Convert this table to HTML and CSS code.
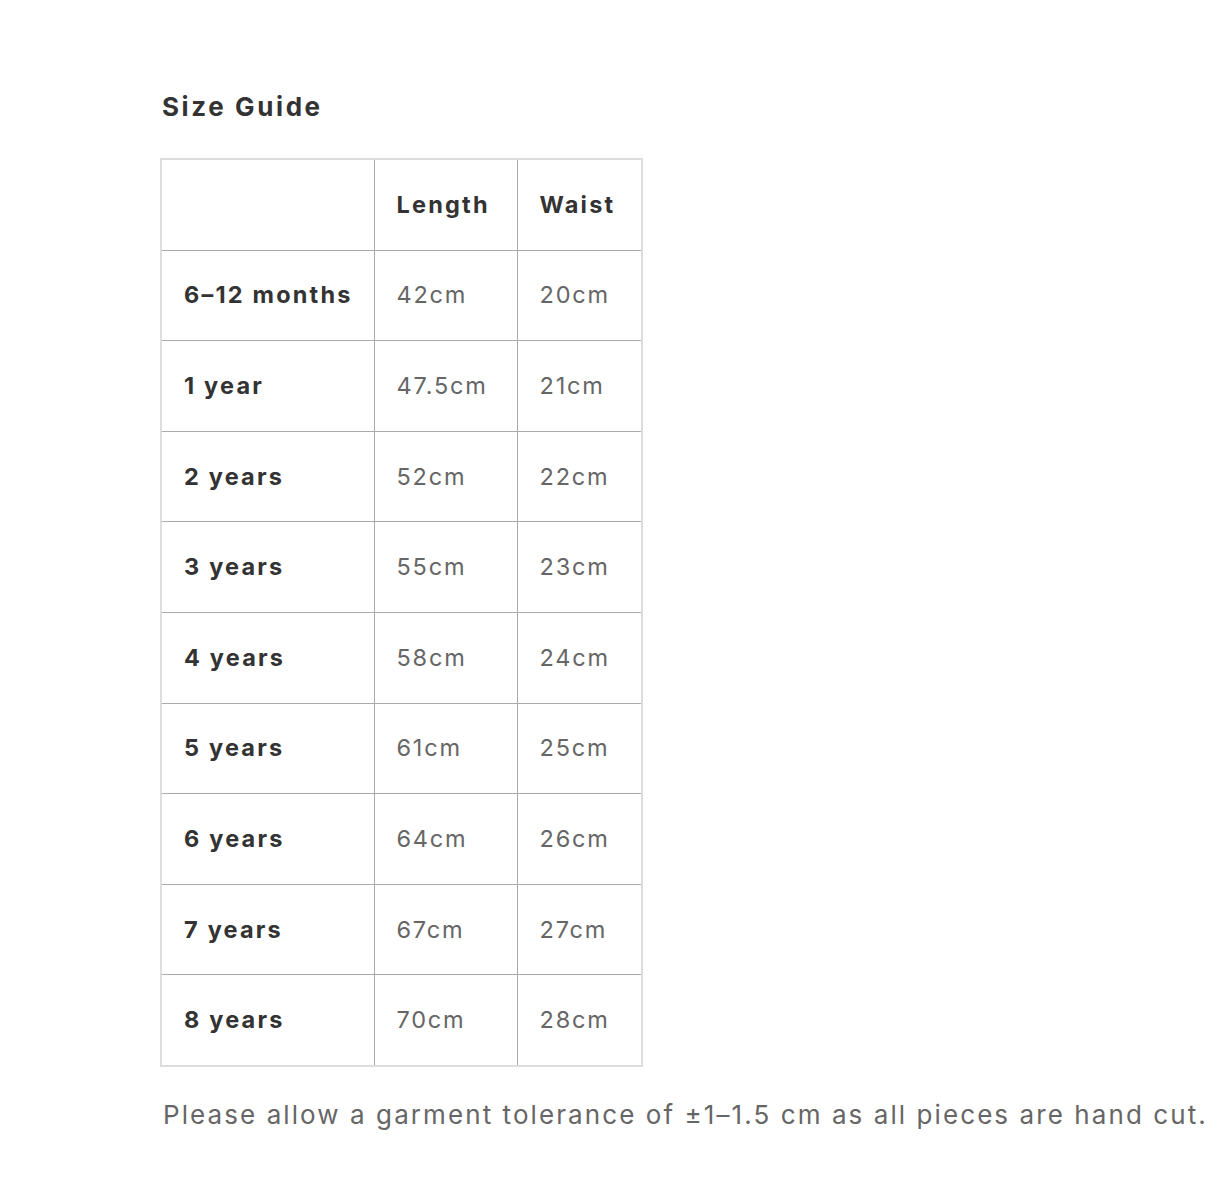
FILE: index.html
```html
<!DOCTYPE html>
<html lang="en">
<head>
<meta charset="utf-8">
<title>Size Guide</title>
<link rel="stylesheet" href="styles.css">
</head>
<body>
<main class="page">
  <h2 class="title">Size Guide</h2>
  <table class="size-table">
    <colgroup>
      <col class="c1"><col class="c2"><col class="c3">
    </colgroup>
    <thead>
      <tr><th></th><th>Length</th><th>Waist</th></tr>
    </thead>
    <tbody>
      <tr><th>6–12 months</th><td>42cm</td><td>20cm</td></tr>
      <tr><th>1 year</th><td>47.5cm</td><td>21cm</td></tr>
      <tr><th>2 years</th><td>52cm</td><td>22cm</td></tr>
      <tr><th>3 years</th><td>55cm</td><td>23cm</td></tr>
      <tr><th>4 years</th><td>58cm</td><td>24cm</td></tr>
      <tr><th>5 years</th><td>61cm</td><td>25cm</td></tr>
      <tr><th>6 years</th><td>64cm</td><td>26cm</td></tr>
      <tr><th>7 years</th><td>67cm</td><td>27cm</td></tr>
      <tr><th>8 years</th><td>70cm</td><td>28cm</td></tr>
    </tbody>
  </table>
  <p class="note">Please allow a garment tolerance of ±1–1.5 cm as all pieces are hand cut.</p>
</main>
</body>
</html>
```
FILE: styles.css
```css
html, body {
  margin: 0;
  padding: 0;
  background: #fff;
}
body {
  font-family: Inter, "Noto Sans", sans-serif;
  color: #333;
}
.page {
  padding: 92px 0 0 162px;
}
.title {
  margin: 0 0 36px;
  font-size: 26px;
  font-weight: 700;
  letter-spacing: 2.6px;
  line-height: 30px;
  color: #333;
}
.size-table {
  border-collapse: collapse;
  border: 2px solid #ddd;
  margin-left: -2px;
  table-layout: fixed;
  width: 481px;
}
.c1 { width: 213px; }
.c2 { width: 143px; }
.c3 { width: 125px; }
.size-table th,
.size-table td {
  border: 1px solid #aaa;
  height: 89.6px;
  padding: 0 0 0 22px;
  text-align: left;
  vertical-align: middle;
  font-size: 23.5px;
  line-height: 30px;
  letter-spacing: 1.8px;
}
.size-table th {
  font-weight: 700;
  color: #333;
  letter-spacing: 2.2px;
}
.size-table td {
  font-weight: 400;
  color: #666;
}
.size-table thead th:first-child,
.size-table tbody th {
  border-left: 2px solid #ddd;
}
.size-table thead th {
  border-top: 2px solid #ddd;
}
.size-table tbody tr:last-child th,
.size-table tbody tr:last-child td {
  border-bottom: 2px solid #ddd;
}
.size-table th:last-child,
.size-table td:last-child {
  border-right: 2px solid #ddd;
}
.note {
  margin: 33px 0 0 1px;
  font-size: 26px;
  line-height: 30px;
  letter-spacing: 2.08px;
  color: #666;
  white-space: nowrap;
}
```
